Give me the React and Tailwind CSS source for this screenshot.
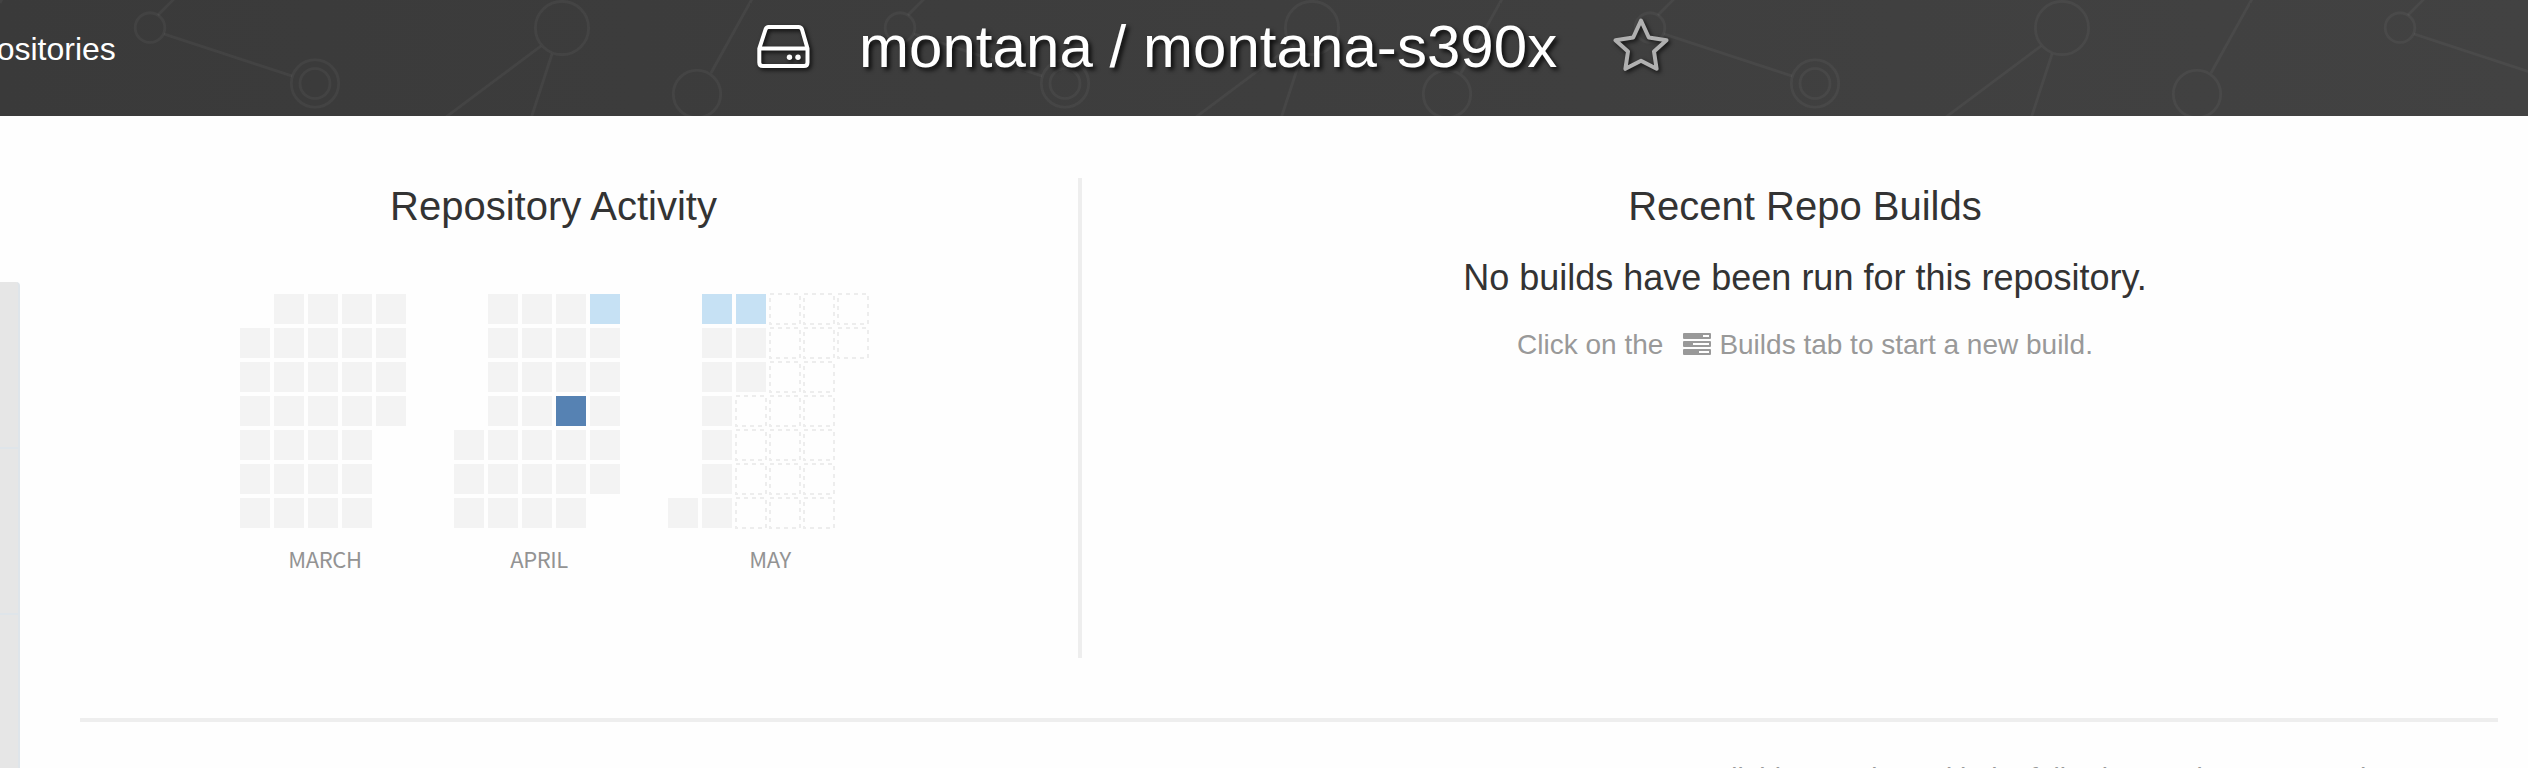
const MONTHS = [
  {
    name: "MARCH",
    rows: [".xxxx", "xxxxx", "xxxxx", "xxxxx", "xxxx.", "xxxx.", "xxxx."],
    label: "w-[170px]",
  },
  {
    name: "APRIL",
    rows: [".xxxl", ".xxxx", ".xxxx", ".xxdx", "xxxxx", "xxxxx", "xxxx."],
    label: "w-[170px]",
  },
  {
    name: "MAY",
    rows: [".llfff", ".xxfff", ".xxff.", ".xfff.", ".xfff.", ".xfff.", "xxfff."],
    label: "w-[204px]",
  },
];

const FILLS = { x: "#f3f3f3", l: "#c6e1f4", d: "#5682b3" };

function Month({ name, rows, label }) {
  const width = rows[0].length * 34;
  return (
    <div className="flex flex-col">
      <svg width={width} height="240" className="block overflow-visible">
        {rows.map((row, r) =>
          row.split("").map((c, i) => {
            if (c === ".") return null;
            if (c === "f")
              return (
                <rect
                  key={r + "-" + i}
                  x={i * 34}
                  y={r * 34}
                  width="30"
                  height="30"
                  fill="none"
                  stroke="#ededed"
                  strokeWidth="2"
                  strokeDasharray="4 4"
                />
              );
            return <rect key={r + "-" + i} x={i * 34} y={r * 34} width="30" height="30" fill={FILLS[c]} />;
          })
        )}
      </svg>
      <div
        className={
          label +
          " mt-[8px] text-center font-['Noto_Sans_CJK_SC','Noto_Sans',sans-serif] text-[22px] leading-8 tracking-[-0.4px] text-[#939393]"
        }
      >
        {name}
      </div>
    </div>
  );
}

function Network() {
  return (
    <svg width="2528" height="116" className="absolute inset-0">
      <defs>
        <pattern id="net" width="750" height="116" patternUnits="userSpaceOnUse">
          <g fill="none" stroke="#ffffff" strokeOpacity="0.045" strokeWidth="2.6">
            <circle cx="150" cy="27.7" r="14.8" />
            <circle cx="315" cy="83.5" r="23.7" />
            <circle cx="315" cy="83.5" r="15" />
            <circle cx="562" cy="28" r="26.6" />
            <circle cx="697" cy="94" r="23.7" />
            <path d="M174 -1L158 15M164 34L292 76M541 46L446 117M552 54L531.500 117M752 -1L711 73M2 -1L0 3" />
          </g>
        </pattern>
      </defs>
      <rect width="2528" height="116" fill="url(#net)" />
    </svg>
  );
}

export default function App() {
  return (
    <div className="flex h-[768px] w-[2528px] flex-col overflow-hidden bg-[#fefefe] font-['Liberation_Sans',Arial,sans-serif] text-[#333333]">
      <header className="relative flex h-[116px] shrink-0 bg-linear-to-r from-[#3a3a3a] to-[#424242]">
        <Network />
        <div className="relative flex w-[756px] shrink-0">
          <div className="-ml-[62px] mt-[30px] text-[32px] leading-[38px] text-white">Repositories</div>
        </div>
        <svg width="56" height="48" viewBox="0 0 56 48" className="relative mt-[24px] shrink-0 overflow-visible drop-shadow-[2px_2px_2px_rgba(0,0,0,0.8)]">
          <path
            d="M12.500 3H42.500Q45 3 46 5.500L51.500 24.500V38.500Q51.500 42 48 42H7Q3.300 42 3.300 38.500V24.500L9.500 5.500Q10.500 3 12.500 3ZM3.500 24.500H51"
            fill="none"
            stroke="#ffffff"
            strokeWidth="4"
            strokeLinejoin="round"
          />
          <circle cx="33.500" cy="33.300" r="2.700" fill="#ffffff" />
          <circle cx="42" cy="33.300" r="2.700" fill="#ffffff" />
        </svg>
        <h1 className="relative ml-[47px] mt-[12px] w-[700px] shrink-0 whitespace-nowrap text-[60px] leading-[70px] tracking-[0.05px] text-white [text-shadow:3px_3px_4px_rgba(0,0,0,0.8)]">
          montana / montana-s390x
        </h1>
        <svg width="58" height="58" viewBox="0 0 58 58" className="relative ml-[53px] mt-[16px] shrink-0 overflow-visible drop-shadow-[2px_2px_2px_rgba(0,0,0,0.7)]">
          <path
            d="M29 4.500L36.800 21.500L54.500 24.300L42 35.500L44.600 52.800L29 44.800L13.400 52.800L16 35.500L3.500 24.300L21.200 21.500Z"
            fill="none"
            stroke="#b0b0b0"
            strokeWidth="4"
            strokeLinejoin="round"
          />
        </svg>
      </header>
      <div className="flex grow">
        <aside className="mt-[166px] flex w-5 shrink-0 flex-col rounded-tr border-r-2 border-[#dfe5ea] bg-[#e6e6e6]">
          <div className="h-[167px] border-b-2 border-[#dfe5ea]" />
          <div className="h-[166px] border-b-2 border-[#dfe5ea]" />
        </aside>
        <main className="ml-[60px] flex w-[2418px] shrink-0 flex-col pt-[62px]">
          <div className="flex h-[480px] shrink-0">
            <section className="flex w-[998px] shrink-0 flex-col">
              <h2 className="mt-[4px] w-[947px] text-center text-[40px] leading-[48px]">Repository Activity</h2>
              <div className="ml-[160px] mt-[64px] flex gap-[44px]">
                {MONTHS.map((m) => (
                  <Month key={m.name} {...m} />
                ))}
              </div>
            </section>
            <div className="w-1 shrink-0 bg-[#eeeeee]" />
            <section className="ml-[8px] flex w-[1430px] shrink-0 flex-col items-center">
              <h2 className="mt-[4px] text-[40px] leading-[48px]">Recent Repo Builds</h2>
              <p className="mt-[27px] text-[36px] leading-[42px]">No builds have been run for this repository.</p>
              <p className="mt-[28px] flex items-center text-[28px] leading-[36px] text-[#999999]">
                Click on the
                <svg width="28" height="22" viewBox="0 0 28 22" className="relative -top-px ml-[20px] mr-[8px]">
                  <path
                    fillRule="evenodd"
                    fill="#999999"
                    d="M1 0H27Q28 0 28 1V5Q28 6 27 6H1Q0 6 0 5V1Q0 0 1 0ZM20 2V4H26V2ZM1 8H27Q28 8 28 9V13Q28 14 27 14H1Q0 14 0 13V9Q0 8 1 8ZM10 10V12H26V10ZM1 16H27Q28 16 28 17V21Q28 22 27 22H1Q0 22 0 21V17Q0 16 1 16ZM16 18V20H26V18Z"
                  />
                </svg>
                Builds tab to start a new build.
              </p>
            </section>
          </div>
          <div className="mt-[60px] h-1 shrink-0 bg-[#eeeeee]" />
          <p className="ml-[1617px] mt-[39px] whitespace-nowrap text-[28px] leading-[34px] text-[#999999]">
            Pull this container with the following Docker command:
          </p>
        </main>
      </div>
    </div>
  );
}
